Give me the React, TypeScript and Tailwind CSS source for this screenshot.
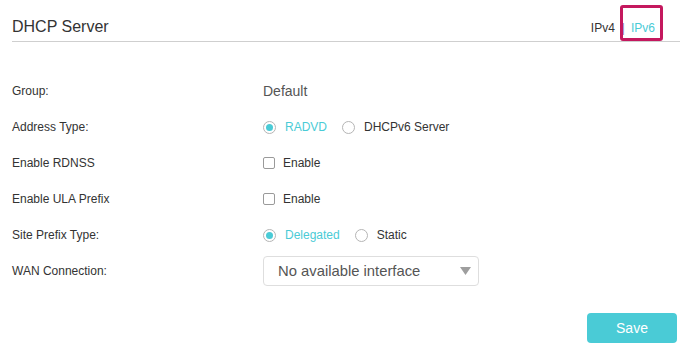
import React from "react";

const teal = "text-[#4acbd6]";

const Radio = ({ checked, label }: { checked?: boolean; label: string }) => (
  <label className="flex items-center gap-[9px] mr-[15px]">
    <span className="w-[13px] h-[13px] rounded-full border border-[#b5b5b5] flex items-center justify-center">
      {checked && <span className="w-[7px] h-[7px] rounded-full bg-[#4acbd6]" />}
    </span>
    <span className={checked ? teal : "text-[#333]"}>{label}</span>
  </label>
);

const Check = ({ label }: { label: string }) => (
  <label className="flex items-center gap-[8px]">
    <span className="w-[12px] h-[12px] rounded-[2px] border border-[#9a9a9a] bg-white" />
    <span className="text-[#333]">{label}</span>
  </label>
);

const Row = ({ label, children }: { label: string; children: React.ReactNode }) => (
  <div className="flex items-center h-9">
    <div className="w-[251px] text-[12px] text-[#333]">{label}</div>
    <div className="flex items-center text-[12px]">{children}</div>
  </div>
);

export default function App() {
  return (
    <div
      className="w-[680px] h-[350px] bg-white overflow-hidden"
      style={{ fontFamily: '"Liberation Sans", Arial, sans-serif' }}
    >
      <div className="ml-3 h-[42px] border-b border-[#cfcfcf] flex items-end justify-between pb-[4px]">
        <div className="text-[16px] leading-[20px] text-[#333]">DHCP Server</div>
        <div className="flex items-center text-[12px] leading-[16px] pr-[25px] pb-[1px]">
          <span className="text-[#333]">IPv4</span>
          <span className="text-[#8d7fc4] ml-[7px] mr-[6px]">|</span>
          <span className="relative text-[#4acbd6]">
            IPv6
            <span className="absolute -left-[11px] -right-[8px] -top-[15px] -bottom-[5px] border-[3px] border-[#c4185e] rounded-[3px]" />
          </span>
        </div>
      </div>

      <div className="ml-3 mt-[31px]">
        <Row label="Group:">
          <span className="text-[14px] text-[#555]">Default</span>
        </Row>
        <Row label="Address Type:">
          <Radio checked label="RADVD" />
          <Radio label="DHCPv6 Server" />
        </Row>
        <Row label="Enable RDNSS">
          <Check label="Enable" />
        </Row>
        <Row label="Enable ULA Prefix">
          <Check label="Enable" />
        </Row>
        <Row label="Site Prefix Type:">
          <Radio checked label="Delegated" />
          <Radio label="Static" />
        </Row>
        <Row label="WAN Connection:">
          <div className="w-[216px] h-[30px] border border-[#dedede] rounded-[4px] flex items-center justify-between pl-[14px] pr-[7px]">
            <span className="text-[14.8px] text-[#555]">No available interface</span>
            <svg width="11" height="8" viewBox="0 0 11 8">
              <path d="M0 0 L11 0 L5.5 8 Z" fill="#9e9e9e" />
            </svg>
          </div>
        </Row>
      </div>

      <div className="flex justify-end pr-[3px] mt-6">
        <button className="w-[90px] h-[30px] rounded-[4px] bg-[#4acbd6] text-white text-[14px]">
          Save
        </button>
      </div>
    </div>
  );
}
